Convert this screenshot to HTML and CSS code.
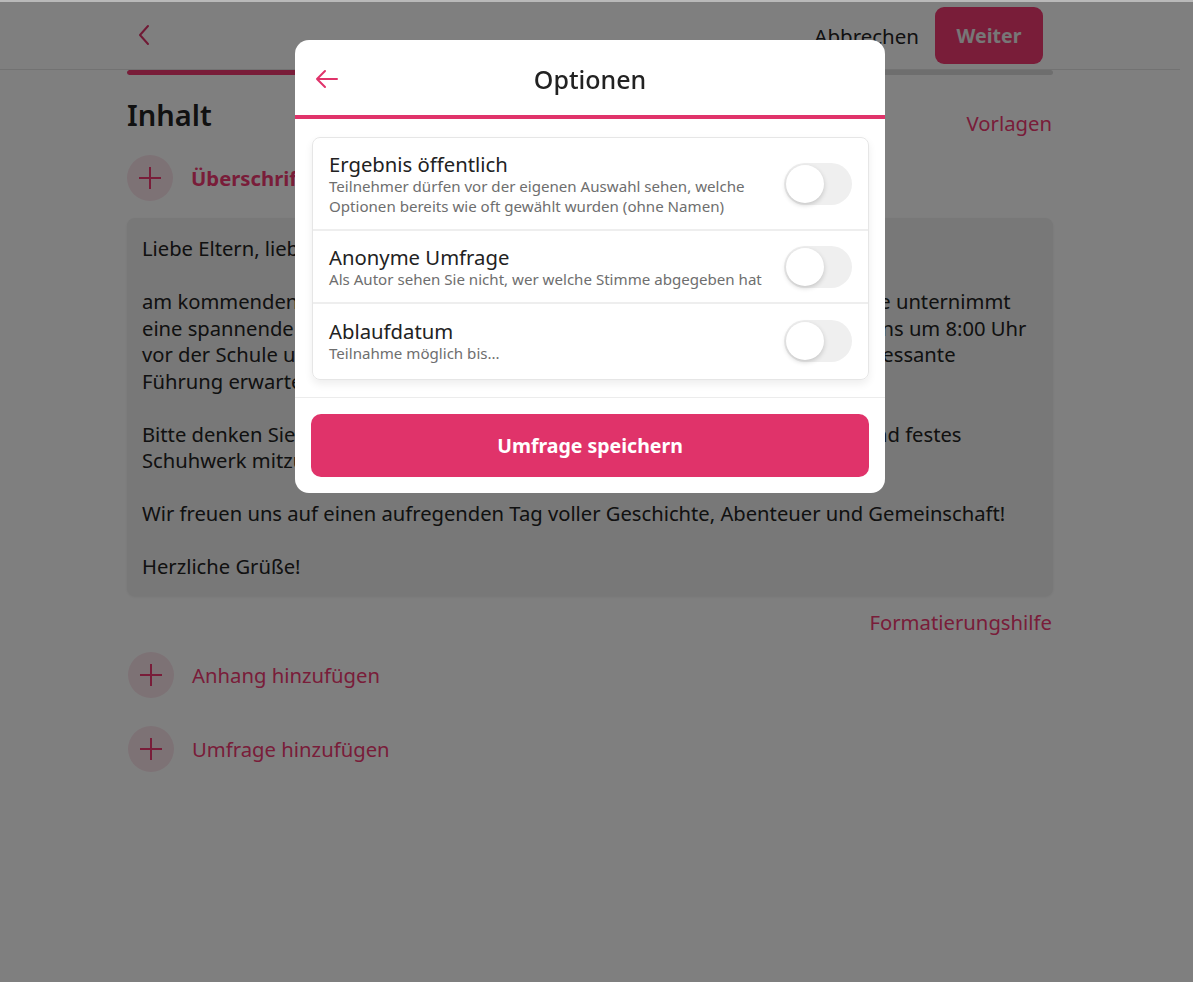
FILE: index.html
```html
<!DOCTYPE html>
<html lang="de">

<head>
    <meta charset="UTF-8">
    <meta name="viewport" content="width=device-width, initial-scale=1.0">
    <title>Nachricht verfassen</title>
    <link rel="stylesheet" href="styles.css">
</head>

<body>
    <div class="page">
        <header class="topbar">
            <div class="topbar-inner">
                <button class="back-btn" type="button" aria-label="Zurück">
                    <svg width="14" height="22" viewBox="0 0 14 22"><path d="M11 2 L3 11 L11 20" fill="none" stroke="currentColor" stroke-width="2" stroke-linecap="round" stroke-linejoin="round"/></svg>
                </button>
                <div class="topbar-actions">
                    <span class="cancel">Abbrechen</span>
                    <button class="next-btn" type="button">Weiter</button>
                </div>
            </div>
        </header>

        <main class="content">
            <div class="progress"><div class="progress-fill"></div></div>

            <div class="section-head">
                <h1>Inhalt</h1>
                <a class="link">Vorlagen</a>
            </div>

            <div class="add-row strong">
                <span class="plus-circle">
                    <svg width="24" height="24" viewBox="0 0 24 24"><path d="M12 1 V23 M1 12 H23" stroke="currentColor" stroke-width="2"/></svg>
                </span>
                Überschrift hinzufügen
            </div>

            <div class="editor">
                Liebe Eltern, liebe Schülerinnen und Schüler,<br>
                <br>
                am kommenden Freitag, den 4. Juni, ist es endlich so weit: Unsere ganze Klasse unternimmt<br>
                eine spannende Exkursion zur alten Burg Rabenstein. Wir treffen uns spätestens um 8:00 Uhr<br>
                vor der Schule und fahren mit dem Bus zur Burg. Dort wird uns eine sehr interessante<br>
                Führung erwarten, bei der wir viel über das Mittelalter lernen.<br>
                <br>
                Bitte denken Sie daran, Ihrem Kind ein Vesperpaket, ausreichend zu trinken und festes<br>
                Schuhwerk mitzugeben.<br>
                <br>
                Wir freuen uns auf einen aufregenden Tag voller Geschichte, Abenteuer und Gemeinschaft!<br>
                <br>
                Herzliche Grüße!
            </div>

            <div class="help-row">
                <a class="link">Formatierungshilfe</a>
            </div>

            <div class="add-row">
                <span class="plus-circle">
                    <svg width="24" height="24" viewBox="0 0 24 24"><path d="M12 1 V23 M1 12 H23" stroke="currentColor" stroke-width="2"/></svg>
                </span>
                Anhang hinzufügen
            </div>
            <div class="add-row">
                <span class="plus-circle">
                    <svg width="24" height="24" viewBox="0 0 24 24"><path d="M12 1 V23 M1 12 H23" stroke="currentColor" stroke-width="2"/></svg>
                </span>
                Umfrage hinzufügen
            </div>
        </main>
    </div>

    <div class="backdrop">
        <div class="modal">
            <div class="modal-header">
                <button class="modal-back" type="button" aria-label="Zurück">
                    <svg width="24" height="20" viewBox="0 0 24 20"><path d="M22 10 H2 M10 2 L2 10 L10 18" fill="none" stroke="currentColor" stroke-width="2" stroke-linecap="round" stroke-linejoin="round"/></svg>
                </button>
                <h2>Optionen</h2>
            </div>

            <div class="modal-body">
                <div class="option-card">
                    <div class="option">
                        <div class="option-text">
                            <div class="option-title">Ergebnis öffentlich</div>
                            <div class="option-sub">Teilnehmer dürfen vor der eigenen Auswahl sehen, welche<br>Optionen bereits wie oft gewählt wurden (ohne Namen)</div>
                        </div>
                        <span class="toggle"><span class="knob"></span></span>
                    </div>
                    <div class="option">
                        <div class="option-text">
                            <div class="option-title">Anonyme Umfrage</div>
                            <div class="option-sub">Als Autor sehen Sie nicht, wer welche Stimme abgegeben hat</div>
                        </div>
                        <span class="toggle"><span class="knob"></span></span>
                    </div>
                    <div class="option">
                        <div class="option-text">
                            <div class="option-title">Ablaufdatum</div>
                            <div class="option-sub">Teilnahme möglich bis...</div>
                        </div>
                        <span class="toggle"><span class="knob"></span></span>
                    </div>
                </div>
            </div>

            <div class="modal-footer">
                <button class="save-btn" type="button">Umfrage speichern</button>
            </div>
        </div>
    </div>
</body>

</html>
```

FILE: styles.css
```css
body {
    margin: 0;
    background-color: #fff;
    font-family: "Noto Sans", "Lato", sans-serif;
    color: #222;
    overflow: hidden;
}

button {
    font-family: inherit;
    border: none;
    background: none;
    cursor: pointer;
    padding: 0;
}

.page {
    width: 1180px;
}

/* top bar */

.topbar {
    height: 69px;
    border-bottom: 1px solid #e4e4e4;
}

.topbar-inner {
    width: 926px;
    margin: 0 auto;
    height: 100%;
    display: flex;
    align-items: center;
    justify-content: space-between;
}

.back-btn {
    color: #e0336a;
    margin-left: 10px;
    display: flex;
}

.topbar-actions {
    display: flex;
    align-items: center;
    gap: 16px;
    margin-right: 10px;
    margin-top: 2px;
}

.cancel {
    font-size: 20.5px;
    color: #222;
}

.next-btn {
    width: 108px;
    height: 57px;
    border-radius: 9px;
    background-color: #f23a73;
    color: #eee;
    font-size: 19.5px;
    font-weight: 700;
}

/* main content */

.content {
    width: 926px;
    margin: 0 auto;
}

.progress {
    height: 5px;
    border-radius: 3px;
    background-color: #ddd;
    overflow: hidden;
}

.progress-fill {
    width: 45%;
    height: 100%;
    background-color: #f23a73;
    border-radius: 3px;
}

.section-head {
    display: flex;
    justify-content: space-between;
    align-items: flex-end;
    margin-top: 23px;
}

h1 {
    margin: 0 0 1px;
    font-size: 29px;
    font-weight: 600;
    line-height: 34px;
    color: #222;
}

.link {
    color: #f23a73;
    font-size: 20.3px;
    line-height: 24px;
    margin-right: 1px;
    margin-bottom: -2px;
}

.add-row {
    display: flex;
    align-items: center;
    gap: 18px;
    font-size: 20.3px;
    color: #f23a73;
    margin-top: 28px;
    padding-left: 1px;
}

.add-row.strong {
    font-weight: 700;
    margin-top: 22px;
    padding-left: 0;
}

.plus-circle {
    width: 46px;
    height: 46px;
    border-radius: 50%;
    background-color: #fbe4eb;
    display: flex;
    justify-content: center;
    align-items: center;
    color: #f23a73;
}

.editor {
    margin-top: 17px;
    background-color: #f0f0f0;
    border-radius: 8px;
    box-shadow: 0 1px 3px rgba(0, 0, 0, 0.08);
    padding: 17px 15px 16px;
    font-size: 20.2px;
    line-height: 26.5px;
    white-space: nowrap;
    color: #222;
}

.help-row {
    display: flex;
    justify-content: flex-end;
    margin-top: 14px;
}

.help-row .link {
    margin-bottom: 0;
}

.help-row + .add-row {
    margin-top: 18px;
}

/* modal */

.backdrop {
    position: fixed;
    inset: 0;
    background-color: rgba(0, 0, 0, 0.5);
    border-top: 2px solid rgba(255, 255, 255, 0.45);
    display: flex;
    justify-content: center;
    align-items: flex-start;
    padding-top: 38px;
    padding-right: 13px;
}

.modal {
    width: 590px;
    background-color: #fff;
    border-radius: 14px;
    overflow: hidden;
}

.modal-header {
    height: 75px;
    border-bottom: 4px solid #e0336a;
    display: flex;
    align-items: center;
    justify-content: center;
    position: relative;
}

.modal-back {
    position: absolute;
    left: 20px;
    top: 29px;
    color: #e0336a;
    display: flex;
}

.modal-header h2 {
    margin: 0;
    font-size: 25px;
    font-weight: 500;
    color: #222;
    margin-top: 2px;
}

.modal-body {
    padding: 18px 16px 17px 17px;
    border-bottom: 1px solid #ececec;
}

.option-card {
    border: 1px solid #e6e6e6;
    border-radius: 8px;
    box-shadow: 0 4px 8px rgba(0, 0, 0, 0.07);
    height: 241px;
    overflow: hidden;
}

.option {
    display: flex;
    justify-content: space-between;
    align-items: center;
    padding: 14px 16px 13px 16px;
    border-bottom: 2px solid #eeeeee;
}

.option:last-child {
    border-bottom: none;
    padding-top: 15px;
}

.option-title {
    font-size: 20.3px;
    line-height: 24px;
    color: #222;
}

.option-sub {
    font-size: 15.1px;
    line-height: 20px;
    color: #6e6e6e;
}

.toggle {
    width: 68px;
    height: 42px;
    border-radius: 21px;
    background-color: #efefef;
    display: flex;
    align-items: center;
    padding: 0 2px;
    box-sizing: border-box;
    flex-shrink: 0;
}

.knob {
    width: 38px;
    height: 38px;
    border-radius: 50%;
    background-color: #fff;
    box-shadow: 0 2px 5px rgba(0, 0, 0, 0.18);
}

.modal-footer {
    padding: 16px;
}

.save-btn {
    width: 100%;
    height: 63px;
    border-radius: 10px;
    background-color: #e0336a;
    color: #fff;
    font-size: 19.5px;
    font-weight: 700;
}
```
